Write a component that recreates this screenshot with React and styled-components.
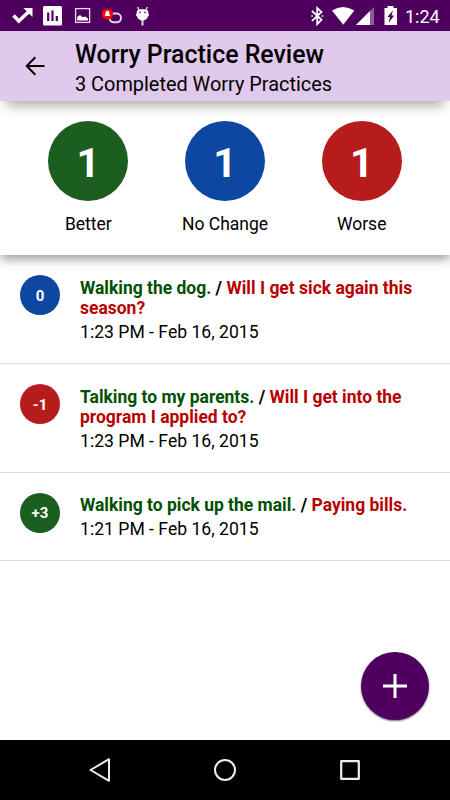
import React from 'react'

import styled, { createGlobalStyle } from 'styled-components'

const GlobalStyle = createGlobalStyle`
    body {
        margin: 0;
        background-color: #fff;
        color: #000;
        font-family: Roboto, sans-serif;
    }
`
const Screen = styled.div`
    display: flex;
    flex-direction: column;
    width: 450px;
    height: 800px;
    overflow: hidden;
    background-color: #fff;
`
const StatusBar = styled.div`
    display: flex;
    justify-content: space-between;
    height: 31px;
    padding: 0 10px 0 7px;
    background-color: #4f005f;
    color: #fff;
    flex-shrink: 0;
`
const StatusGroup = styled.div`
    display: flex;
    align-items: flex-start;
`
const StatusIcon = styled.svg`
    display: block;
    width: ${props => props.$width || 30}px;
    height: 31px;
`
const Clock = styled.span`
    width: 35px;
    margin-left: 2px;
    font-size: 18px;
    line-height: 33px;
    white-space: nowrap;
`
const Header = styled.header`
    display: flex;
    align-items: center;
    height: 70px;
    background-color: #e0c9eb;
    box-shadow: 0 10px 12px -6px rgba(0, 0, 0, 0.36);
    flex-shrink: 0;
    z-index: 2;
`
const BackButton = styled.button`
    display: flex;
    justify-content: center;
    width: 70px;
    margin-right: 5px;
    padding: 0;
    border: none;
    background: none;
`
const HeaderText = styled.div`
    padding-top: 7px;
`
const Title = styled.h1`
    margin: 0;
    font-size: 24.9px;
    font-weight: 500;
    line-height: 30px;
`
const Subtitle = styled.p`
    margin: 0;
    font-size: 19.9px;
    line-height: 30px;
`
const Summary = styled.section`
    display: flex;
    height: 154px;
    padding: 0 20px;
    box-sizing: border-box;
    background-color: #fff;
    box-shadow: 0 4px 10px rgba(0, 0, 0, 0.4);
    flex-shrink: 0;
    z-index: 1;
`
const Stat = styled.div`
    display: flex;
    flex: 1;
    flex-direction: column;
    align-items: center;
    padding-top: 20px;
    font-size: 17.5px;
    line-height: 22px;
`
const Circle = styled.div`
    display: flex;
    justify-content: center;
    align-items: center;
    width: ${props => props.$size}px;
    height: ${props => props.$size}px;
    padding-top: ${props => props.$drop}px;
    box-sizing: border-box;
    border-radius: 50%;
    background-color: ${props => props.$color};
    color: #fff;
    font-size: ${props => props.$font}px;
    font-weight: 700;
    line-height: 1;
    flex-shrink: 0;
`
const StatLabel = styled.span`
    margin-top: 12px;
`
const List = styled.main`
    flex: 1;
`
const Row = styled.article`
    display: flex;
    height: ${props => props.$height}px;
    padding: 20px 20px 0;
    box-sizing: border-box;
    border-bottom: 1px solid #dcdcdc;
`
const RowBody = styled.div`
    margin-left: 20px;
    padding-top: 2.9px;
`
const RowTitle = styled.h2`
    margin: 0;
    font-size: 17.48px;
    font-weight: 700;
    line-height: 20px;
`
const Practice = styled.span`
    color: #005000;
`
const Worry = styled.span`
    color: #b80000;
`
const Time = styled.p`
    margin: 2px 0 0;
    font-size: 17.6px;
    line-height: 24px;
`
const AddButton = styled.button`
    position: absolute;
    left: 361px;
    top: 652px;
    display: flex;
    justify-content: center;
    align-items: center;
    width: 68px;
    height: 68px;
    padding: 0;
    border: none;
    border-radius: 50%;
    background-color: #4f005f;
    box-shadow: 0 1px 2px rgba(0, 0, 0, 0.6);
`
const NavBar = styled.nav`
    display: flex;
    justify-content: space-between;
    align-items: center;
    height: 60px;
    padding: 0 85px;
    background-color: #000;
    flex-shrink: 0;
`

const stats = [
    { label: 'Better', count: 1, color: '#1b5e20' },
    { label: 'No Change', count: 1, color: '#0d47a1' },
    { label: 'Worse', count: 1, color: '#b71c1c' },
]

const reviews = [
    { score: '0', color: '#0d47a1', practice: 'Walking the dog.', worry: 'Will I get sick again this season?', time: '1:23 PM - Feb 16, 2015', height: 109 },
    { score: '-1', color: '#b71c1c', practice: 'Talking to my parents.', worry: 'Will I get into the program I applied to?', time: '1:23 PM - Feb 16, 2015', height: 108.5 },
    { score: '+3', color: '#1b5e20', practice: 'Walking to pick up the mail.', worry: 'Paying bills.', time: '1:21 PM - Feb 16, 2015', height: 88.5 },
]

const Notifications = () => (
    <StatusGroup>
        <StatusIcon viewBox="0 0 30 31">
            <path d="M6.5 15.5l5.3 5.5L22.5 11" fill="none" stroke="#fff" strokeWidth="3.4" />
            <path d="M16.5 8h9v9z" fill="#fff" />
        </StatusIcon>
        <StatusIcon viewBox="0 0 30 31">
            <rect x="6" y="6" width="19" height="19.5" rx="1.5" fill="#fff" />
            <path d="M11.2 12.5V21M15.5 10.5V21M19.8 16V21" stroke="#4f005f" strokeWidth="2.2" />
        </StatusIcon>
        <StatusIcon viewBox="0 0 30 31">
            <rect x="8.6" y="8.6" width="14" height="13.8" fill="none" stroke="#e6dbe8" strokeWidth="1.3" />
            <path d="M10.2 20.5v-3.5l2.8-2 2.5 2.3 2.5-.8 3 2v2z" fill="#fff" />
        </StatusIcon>
        <StatusIcon viewBox="0 0 30 31">
            <rect x="12.5" y="13.6" width="11.5" height="8.6" rx="4.3" fill="none" stroke="#e6dbe8" strokeWidth="2" />
            <circle cx="10.4" cy="14" r="5.6" fill="#f00a0a" />
            <path d="M7.8 16v-1l.7-.7v-1.4c0-2.9 3.8-2.9 3.8 0v1.4l.7.7v1z" fill="#fff" />
        </StatusIcon>
        <StatusIcon viewBox="0 0 30 31">
            <path d="M10.5 7l2 3.5M20.5 7l-2 3.5" stroke="#fff" strokeWidth="1.2" />
            <path d="M10.2 10.5q5.3-3 10.6 0c1.5 3 .6 10-5.3 10s-6.8-7-5.3-10z" fill="#fff" />
            <path d="M9.2 14.5l2 2M21.8 14.5l-2 2" stroke="#fff" strokeWidth="1.5" />
            <path d="M15.5 20v5.5" stroke="#ddd" strokeWidth="2" />
            <circle cx="13" cy="12.4" r=".8" fill="#4f005f" />
            <circle cx="18" cy="12.4" r=".8" fill="#4f005f" />
        </StatusIcon>
    </StatusGroup>
)

const SystemIcons = () => (
    <StatusGroup>
        <StatusIcon $width={26} viewBox="304 0 26 31">
            <path d="M312 11l9.5 8.8-4.3 4.2V8l4.3 4-9.5 8.8" fill="none" stroke="#fff" strokeWidth="1.8" />
            <path d="M312 16h.1M322.5 16h.1" stroke="#f3edf5" strokeWidth="1.6" strokeLinecap="square" />
        </StatusIcon>
        <StatusIcon $width={26} viewBox="330 0 26 31">
            <path d="M332 10.5q11-7 22.3 0L343.2 24.8z" fill="#fff" />
        </StatusIcon>
        <StatusIcon $width={22} viewBox="356 0 22 31">
            <path d="M374 7v18h-18z" fill="#8c5c96" />
            <path d="M370 11v14h-14z" fill="#fff" />
        </StatusIcon>
        <StatusIcon $width={25} viewBox="378 0 25 31">
            <path d="M387.5 6h6v2h3.5v17h-12.5V8h3z" fill="#fff" />
            <path d="M393 10.5l-5.7 6.6h2.7l-1.5 5.8 5.7-7.4h-2.7z" fill="#4f005f" />
        </StatusIcon>
        <Clock>1:24</Clock>
    </StatusGroup>
)

const App = () => {
  return (
    <Screen>
        <GlobalStyle />

        <StatusBar>
            <Notifications />
            <SystemIcons />
        </StatusBar>

        <Header>
            <BackButton aria-label="Back">
                <svg width="20" height="20" viewBox="0 0 20 20" fill="none" stroke="#000" strokeWidth="2">
                    <path d="M19.5 10H2M10.3 1.2L1.7 10l8.6 8.8" />
                </svg>
            </BackButton>
            <HeaderText>
                <Title>Worry Practice Review</Title>
                <Subtitle>3 Completed Worry Practices</Subtitle>
            </HeaderText>
        </Header>

        <Summary>
            {stats.map(stat => (
                <Stat key={stat.label}>
                    <Circle $size={80} $font={41} $drop={4} $color={stat.color}>{stat.count}</Circle>
                    <StatLabel>{stat.label}</StatLabel>
                </Stat>
            ))}
        </Summary>

        <List>
            {reviews.map(review => (
                <Row key={review.score} $height={review.height}>
                    <Circle $size={40} $font={15} $drop={2} $color={review.color}>{review.score}</Circle>
                    <RowBody>
                        <RowTitle>
                            <Practice>{review.practice}</Practice> / <Worry>{review.worry}</Worry>
                        </RowTitle>
                        <Time>{review.time}</Time>
                    </RowBody>
                </Row>
            ))}
        </List>

        <AddButton aria-label="Add">
            <svg width="24" height="24" viewBox="0 0 24 24" stroke="#fff" strokeWidth="3">
                <path d="M12 0v24M0 12h24" />
            </svg>
        </AddButton>

        <NavBar>
            <svg width="30" height="30" viewBox="0 0 30 30" fill="none" stroke="#eee" strokeWidth="2" strokeLinejoin="round">
                <path d="M24 4.2v21.6L5.5 15z" />
            </svg>
            <svg width="30" height="30" viewBox="0 0 30 30" fill="none" stroke="#eee" strokeWidth="2">
                <circle cx="15" cy="15" r="10" />
            </svg>
            <svg width="30" height="30" viewBox="0 0 30 30" fill="none" stroke="#eee" strokeWidth="2.2" strokeLinejoin="round">
                <rect x="6.2" y="6.2" width="17.6" height="17.6" />
            </svg>
        </NavBar>
    </Screen>
  )
}

export default App
